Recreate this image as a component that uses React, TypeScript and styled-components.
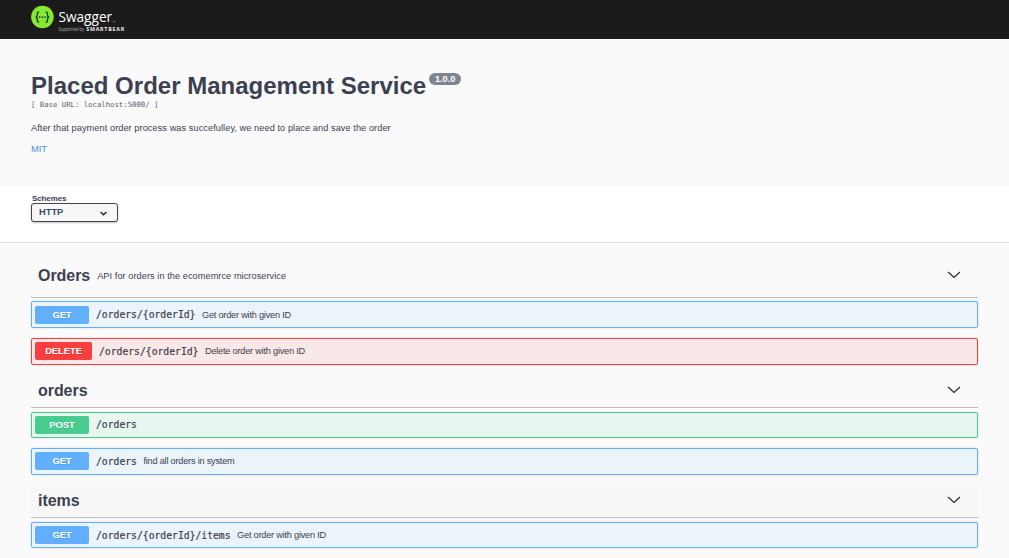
import React from "react";
import styled, { createGlobalStyle } from "styled-components";

const GlobalStyle = createGlobalStyle`
  * { box-sizing: border-box; }
  body {
    margin: 0;
    background: #fafafa;
    color: #3b4151;
    font-family: "Liberation Sans", Arial, sans-serif;
    overflow: hidden;
  }
`;

const Page = styled.div`
  height: 558px;
  overflow: hidden;
`;

const Topbar = styled.header`
  height: 39px;
  padding: 4px 31px 0;
  background: #1b1b1b;
`;

const LogoSvg = styled.svg`
  display: block;
`;

const Info = styled.section`
  height: 148px;
  padding: 32px 31px 0;
`;

const TitleRow = styled.div`
  display: flex;
  align-items: flex-start;
  height: 28px;
`;

const Title = styled.h1`
  margin: 0;
  font-size: 24px;
  line-height: 30px;
  letter-spacing: 0.01px;
  white-space: nowrap;
`;

const Version = styled.span`
  width: 32px;
  height: 12px;
  margin: 2px 0 0 3px;
  border-radius: 6px;
  background: #7d8492;
  color: #fff;
  font-size: 9.2px;
  font-weight: 700;
  line-height: 12px;
  text-align: center;
`;

const BaseUrl = styled.div`
  height: 12px;
  font-family: "DejaVu Sans Mono", monospace;
  font-size: 7.3px;
  line-height: 12px;
  color: #5b6070;
`;

const Description = styled.p`
  margin: 11px 0 0;
  font-size: 9.2px;
  line-height: 12px;
  letter-spacing: 0.07px;
`;

const License = styled.a`
  display: block;
  margin-top: 9px;
  font-size: 9.3px;
  line-height: 12px;
  color: #4990e2;
`;

const SchemeBar = styled.section`
  height: 56px;
  padding: 7px 31px 0;
  background: #fff;
  border-bottom: 1px solid #e1e1e2;
`;

const SchemeLabel = styled.div`
  padding-left: 1px;
  font-size: 8px;
  font-weight: 700;
  line-height: 9px;
  letter-spacing: -0.12px;
`;

const Select = styled.div`
  display: flex;
  align-items: center;
  justify-content: space-between;
  width: 87px;
  height: 19px;
  padding: 0 10px 2px 7px;
  border: 1px solid #41444e;
  border-radius: 3px;
  background: #f7f7f7;
  box-shadow: 0 1px 2px rgba(0, 0, 0, 0.25);
  font-size: 9.3px;
  font-weight: 700;
  color: #3b4d70;
`;

const SelectArrow = styled.svg`
  position: relative;
  top: 1px;
`;

const Sections = styled.main`
  padding: 10px 31px 0;
`;

const TagHeader = styled.div<{ $height: number; $top?: number; $lift?: number; $hover?: boolean }>`
  display: flex;
  align-items: center;
  height: ${(p) => p.$height}px;
  margin-top: ${(p) => p.$top ?? 0}px;
  padding: 0 17px ${(p) => p.$lift ?? 0}px 7px;
  border-bottom: 1px solid #bbbdc2;
  background: ${(p) => (p.$hover ? "#f8f8f8" : "transparent")};
`;

const TagName = styled.h2`
  margin: 0;
  padding-top: 1px;
  font-size: 16px;
  line-height: 20px;
  letter-spacing: -0.05px;
`;

const TagText = styled.span`
  margin: 2px 0 0 7px;
  font-size: 9.2px;
  letter-spacing: 0.06px;
`;

const Chevron = styled.svg`
  display: block;
  margin-left: auto;
`;

const palette = {
  GET: { solid: "#61affe", soft: "#ebf3fb" },
  POST: { solid: "#49cc90", soft: "#e8f6f0" },
  DELETE: { solid: "#f93e3e", soft: "#fae7e7" },
};
type Method = keyof typeof palette;

const Row = styled.div<{ $method: Method; $height: number; $top: number; $inset: number }>`
  display: flex;
  align-items: flex-start;
  height: ${(p) => p.$height}px;
  margin-top: ${(p) => p.$top}px;
  padding: ${(p) => p.$inset}px 3px 0;
  border: 1px solid ${(p) => palette[p.$method].solid};
  border-radius: 2px;
  background: ${(p) => palette[p.$method].soft};
  box-shadow: 0 0 2px rgba(0, 0, 0, 0.16);
  line-height: 18px;
`;

const Badge = styled.span<{ $method: Method }>`
  width: ${(p) => (p.$method === "DELETE" ? 57 : 54)}px;
  height: 18px;
  border-radius: 2px;
  background: ${(p) => palette[p.$method].solid};
  color: #fff;
  font-size: 9.3px;
  font-weight: 700;
  text-align: center;
  text-shadow: 0 1px 0 rgba(0, 0, 0, 0.1);
`;

const Path = styled.span<{ $drop: number }>`
  margin-left: 7px;
  padding-top: ${(p) => p.$drop}px;
  font-family: "DejaVu Sans Mono", monospace;
  font-size: 9.73px;
  -webkit-text-stroke: 0.2px #3b4151;
`;

const Summary = styled.span`
  margin-left: 6.5px;
  font-size: 9.2px;
  letter-spacing: -0.22px;
`;

function Arrow() {
  return (
    <Chevron width="14" height="10" viewBox="0 0 14 10" fill="none" stroke="#2b2c30" strokeWidth="1.25">
      <path d="M1 2 L7 7.4 L13 2" />
    </Chevron>
  );
}

function Logo() {
  return (
    <LogoSvg width="100" height="32" viewBox="0 0 100 32">
      <circle cx="11.4" cy="13" r="11.3" fill="#85ea2d" />
      <g fill="none" stroke="#173647" strokeWidth="1.3">
        <path d="M8.2 8.2 C6 7.8 6.3 9.2 6.3 10.8 C6.3 12.3 5.8 13.1 4.6 13.1 C5.8 13.1 6.3 13.9 6.3 15.4 C6.3 17 6 18.4 8.2 18" />
        <path d="M14.6 8.2 C16.8 7.8 16.5 9.2 16.5 10.8 C16.5 12.3 17 13.1 18.2 13.1 C17 13.1 16.5 13.9 16.5 15.4 C16.5 17 16.8 18.4 14.6 18" />
      </g>
      <g fill="#173647">
        <circle cx="8.7" cy="13.1" r="0.85" />
        <circle cx="11.4" cy="13.1" r="0.85" />
        <circle cx="14.1" cy="13.1" r="0.85" />
      </g>
      <text x="27.4" y="18" fill="#fff" fontFamily="Open Sans, sans-serif" fontSize="14.5" textLength="53.8" lengthAdjust="spacingAndGlyphs">Swagger</text>
      <path d="M82 17.5h2.5" stroke="#888" strokeWidth="0.7" />
      <text x="27.5" y="26.8" fill="#b5b5b5" fontFamily="Open Sans, sans-serif" fontSize="4.8" textLength="25.5" lengthAdjust="spacingAndGlyphs">Supported by</text>
      <text x="55.2" y="26.8" fill="#f0f0f0" fontFamily="Open Sans, sans-serif" fontWeight="700" fontSize="5.3" textLength="38">SMARTBEAR</text>
    </LogoSvg>
  );
}

interface OperationProps {
  method: Method;
  path: string;
  summary?: string;
  height: number;
  top: number;
  inset?: number;
  drop?: number;
}

function Operation({ method, path, summary, height, top, inset = 3, drop = 0 }: OperationProps) {
  return (
    <Row $method={method} $height={height} $top={top} $inset={inset}>
      <Badge $method={method}>{method}</Badge>
      <Path $drop={drop}>{path}</Path>
      {summary && <Summary>{summary}</Summary>}
    </Row>
  );
}

export default function App() {
  return (
    <Page>
      <GlobalStyle />
      <Topbar>
        <Logo />
      </Topbar>
      <Info>
        <TitleRow>
          <Title>Placed Order Management Service</Title>
          <Version>1.0.0</Version>
        </TitleRow>
        <BaseUrl>[ Base URL: localhost:5000/ ]</BaseUrl>
        <Description>After that payment order process was succefulley, we need to place and save the order</Description>
        <License>MIT</License>
      </Info>
      <SchemeBar>
        <SchemeLabel>Schemes</SchemeLabel>
        <Select>
          HTTP
          <SelectArrow width="7" height="6" viewBox="0 0 7 6" fill="none" stroke="#222" strokeWidth="1.4">
            <path d="M0.6 2 L3.5 4.8 L6.4 2" />
          </SelectArrow>
        </Select>
      </SchemeBar>
      <Sections>
        <TagHeader $height={45}>
          <TagName>Orders</TagName>
          <TagText>API for orders in the ecomemrce microservice</TagText>
          <Arrow />
        </TagHeader>
        <Operation method="GET" path="/orders/{orderId}" summary="Get order with given ID" height={27} top={3} inset={4} />
        <Operation method="DELETE" path="/orders/{orderId}" summary="Delete order with given ID" height={27} top={10} drop={1} />
        <TagHeader $height={33} $top={10} $lift={2}>
          <TagName>orders</TagName>
          <Arrow />
        </TagHeader>
        <Operation method="POST" path="/orders" height={26} top={4} />
        <Operation method="GET" path="/orders" summary="find all orders in system" height={27} top={10} drop={1} />
        <TagHeader $height={33} $top={10} $lift={2} $hover>
          <TagName>items</TagName>
          <Arrow />
        </TagHeader>
        <Operation method="GET" path="/orders/{orderId}/items" summary="Get order with given ID" height={26} top={4} drop={1} />
      </Sections>
    </Page>
  );
}
